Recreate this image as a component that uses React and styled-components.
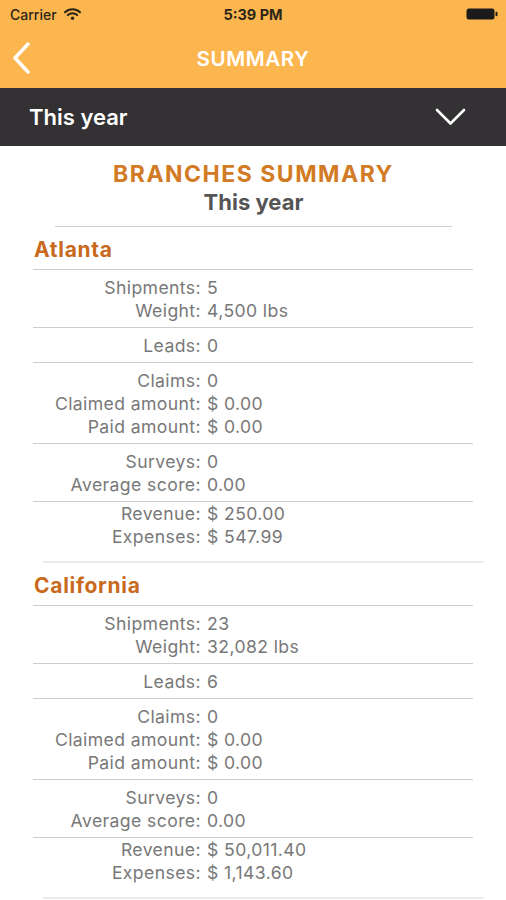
import React from "react";
import styled, { createGlobalStyle } from "styled-components";

const GlobalStyle = createGlobalStyle`
  html, body {
    margin: 0;
    padding: 0;
    overflow: hidden;
    background: #ffffff;
  }
  body {
    font-family: Inter, "Noto Sans", "Liberation Sans", sans-serif;
    -webkit-font-smoothing: antialiased;
  }
  * { box-sizing: border-box; }
`;

const Page = styled.div`
  width: 506px;
  min-height: 900px;
  background: #ffffff;
`;

const Header = styled.header`
  background: #fcb64f;
`;

const StatusBar = styled.div`
  height: 28px;
  display: flex;
  align-items: center;
  justify-content: space-between;
  padding: 0 8px 0 10px;
  position: relative;
  color: #2c2617;
  font-size: 14px;
`;

const StatusLeft = styled.div`
  display: flex;
  align-items: center;
  gap: 7px;
  font-weight: 500;
`;

const StatusTime = styled.div`
  position: absolute;
  left: 0;
  right: 0;
  text-align: center;
  font-weight: 700;
  font-size: 14.5px;
  pointer-events: none;
`;

const NavBar = styled.div`
  height: 60px;
  display: grid;
  grid-template-columns: 60px 1fr 60px;
  align-items: center;
`;

const BackButton = styled.button`
  background: none;
  border: 0;
  padding: 0 0 0 11px;
  display: flex;
  align-items: center;
  height: 100%;
  cursor: pointer;
`;

const NavTitle = styled.h1`
  margin: 0;
  text-align: center;
  color: #ffffff;
  font-size: 20.5px;
  font-weight: 600;
  letter-spacing: 0.6px;
`;

const FilterBar = styled.div`
  height: 58px;
  background: #333133;
  display: flex;
  align-items: center;
  justify-content: space-between;
  padding: 0 40px 0 29px;
  color: #ffffff;
`;

const FilterLabel = styled.span`
  font-size: 22px;
  font-weight: 600;
`;

const Content = styled.main`
  display: flex;
  flex-direction: column;
`;

const TitleBlock = styled.div`
  display: flex;
  flex-direction: column;
  align-items: center;
  margin: 14px 54px 0 55px;
  padding-bottom: 10px;
  border-bottom: 1px solid #cfcfcf;
`;

const Title = styled.h2`
  margin: 0;
  font-size: 23px;
  line-height: 28px;
  font-weight: 700;
  letter-spacing: 1.5px;
  color: #d27b24;
`;

const Subtitle = styled.div`
  font-size: 22px;
  line-height: 28px;
  font-weight: 700;
  color: #555555;
`;

const Branch = styled.section`
  margin: 0 33px;
  padding-top: 9px;
`;

const BranchName = styled.h3`
  margin: 0;
  padding: 0 0 6px 1px;
  font-size: 21px;
  line-height: 27px;
  font-weight: 700;
  letter-spacing: 0.7px;
  color: #c8691d;
  border-bottom: 1px solid #cdcdcd;
`;

const Group = styled.div`
  display: grid;
  grid-template-columns: 168px 1fr;
  column-gap: 6px;
  padding: ${(p) => (p.$last ? "0 0 13px" : "6px 0 5px")};
  border-bottom: ${(p) => (p.$last ? "none" : "1px solid #cdcdcd")};
  font-size: 17.6px;
  line-height: 23px;
  letter-spacing: 0.4px;
  color: #787878;
`;

const Label = styled.span`
  text-align: right;
  white-space: nowrap;
`;

const Value = styled.span`
  white-space: nowrap;
`;

const SectionDivider = styled.hr`
  margin: 0 22px 0 43px;
  border: 0;
  height: 2px;
  background: #ececec;
`;

const WifiIcon = () => (
  <svg width="17" height="12" viewBox="0 0 17 12">
    <path d="M1 4.2 A11 11 0 0 1 16 4.2" fill="none" stroke="#2c2617" strokeWidth="2" strokeLinecap="round" />
    <path d="M3.8 7 A7 7 0 0 1 13.2 7" fill="none" stroke="#2c2617" strokeWidth="2" strokeLinecap="round" />
    <circle cx="8.5" cy="10.2" r="1.7" fill="#2c2617" />
  </svg>
);

const BatteryIcon = () => (
  <svg width="32" height="12" viewBox="0 0 32 12">
    <rect x="0.5" y="0.5" width="28" height="11" rx="2.5" fill="#1a1a1a" />
    <rect x="29.5" y="3.8" width="2" height="4.4" rx="1" fill="#1a1a1a" />
  </svg>
);

const BackChevron = () => (
  <svg width="20" height="32" viewBox="0 0 20 32">
    <path d="M17 2 L4 16 L17 30" fill="none" stroke="#ffffff" strokeWidth="3.4" strokeLinecap="round" strokeLinejoin="round" />
  </svg>
);

const DownChevron = () => (
  <svg width="31" height="18" viewBox="0 0 31 18">
    <path d="M2 2 L15.5 15.5 L29 2" fill="none" stroke="#ffffff" strokeWidth="2.6" strokeLinecap="round" strokeLinejoin="round" />
  </svg>
);

const branches = [
  {
    name: "Atlanta",
    groups: [
      [["Shipments:", "5"], ["Weight:", "4,500 lbs"]],
      [["Leads:", "0"]],
      [["Claims:", "0"], ["Claimed amount:", "$ 0.00"], ["Paid amount:", "$ 0.00"]],
      [["Surveys:", "0"], ["Average score:", "0.00"]],
      [["Revenue:", "$ 250.00"], ["Expenses:", "$ 547.99"]],
    ],
  },
  {
    name: "California",
    groups: [
      [["Shipments:", "23"], ["Weight:", "32,082 lbs"]],
      [["Leads:", "6"]],
      [["Claims:", "0"], ["Claimed amount:", "$ 0.00"], ["Paid amount:", "$ 0.00"]],
      [["Surveys:", "0"], ["Average score:", "0.00"]],
      [["Revenue:", "$ 50,011.40"], ["Expenses:", "$ 1,143.60"]],
    ],
  },
];

export default function App() {
  return (
    <>
      <GlobalStyle />
      <Page>
        <Header>
          <StatusBar>
            <StatusLeft>
              <span>Carrier</span>
              <WifiIcon />
            </StatusLeft>
            <StatusTime>5:39 PM</StatusTime>
            <BatteryIcon />
          </StatusBar>
          <NavBar>
            <BackButton aria-label="Back">
              <BackChevron />
            </BackButton>
            <NavTitle>SUMMARY</NavTitle>
            <span />
          </NavBar>
        </Header>
        <FilterBar>
          <FilterLabel>This year</FilterLabel>
          <DownChevron />
        </FilterBar>
        <Content>
          <TitleBlock>
            <Title>BRANCHES SUMMARY</Title>
            <Subtitle>This year</Subtitle>
          </TitleBlock>
          {branches.map((b) => (
            <React.Fragment key={b.name}>
              <Branch>
                <BranchName>{b.name}</BranchName>
                {b.groups.map((g, gi) => (
                  <Group key={gi} $last={gi === b.groups.length - 1}>
                    {g.map(([l, v]) => (
                      <React.Fragment key={l}>
                        <Label>{l}</Label>
                        <Value>{v}</Value>
                      </React.Fragment>
                    ))}
                  </Group>
                ))}
              </Branch>
              <SectionDivider />
            </React.Fragment>
          ))}
        </Content>
      </Page>
    </>
  );
}
